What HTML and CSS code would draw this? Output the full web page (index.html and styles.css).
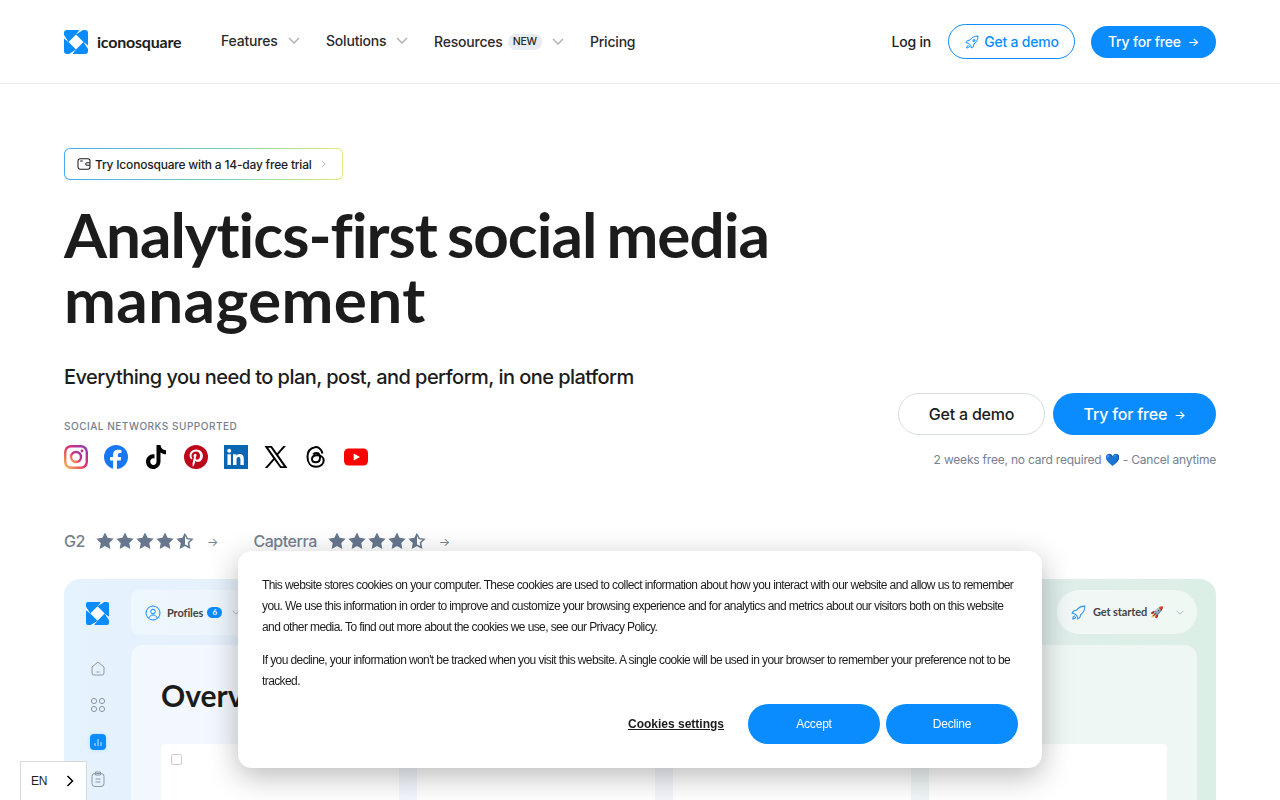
FILE: index.html
```html
<!DOCTYPE html>
<html lang="en">
<head>
    <meta charset="UTF-8">
    <meta name="viewport" content="width=device-width, initial-scale=1.0">
    <title>Iconosquare</title>
    <link rel="stylesheet" href="styles.css">
</head>
<body>
    <svg class="defs" width="0" height="0">
        <defs>
            <symbol id="star" viewBox="0 0 24 24"><path d="M12 .5l3.500 7.300 8 1.100-5.800 5.600 1.400 8L12 18.700 4.900 22.500l1.400-8L.5 8.900l8-1.100z"/></symbol>
            <symbol id="star-half" viewBox="0 0 24 24"><path d="M12 .5v18.200l-7.100 3.800 1.400-8L.5 8.900l8-1.100z"/><path d="M12 3l2.900 5.900 6.400.9-4.600 4.500 1.100 6.400-5.800-3" fill="#fff" stroke="currentColor" stroke-width="2"/></symbol>
        </defs>
    </svg>

    <header class="topbar">
        <a class="brand" href="#">
            <svg class="logo" viewBox="0 0 24 24"><rect width="24" height="24" rx="3" fill="#0a8cff"/><path d="M12 4.500 19.500 12 12 19.500 4.500 12zM12 4.500 15.500 0h3.500zM19.500 12 24 15.500V19zM12 19.500 8.500 24H5zM4.500 12 0 8.500V5z" fill="#fff"/></svg>
            <span>iconosquare</span>
        </a>
        <nav class="nav">
            <a class="nav-item features" href="#">Features <svg class="chev" viewBox="0 0 12 7"><path d="M1 1l5 5 5-5"/></svg></a>
            <a class="nav-item solutions" href="#">Solutions <svg class="chev" viewBox="0 0 12 7"><path d="M1 1l5 5 5-5"/></svg></a>
            <a class="nav-item resources" href="#">Resources <span class="new">NEW</span> <svg class="chev" viewBox="0 0 12 7"><path d="M1 1l5 5 5-5"/></svg></a>
            <a class="nav-item" href="#">Pricing</a>
        </nav>
        <div class="top-actions">
            <a class="login" href="#">Log in</a>
            <a class="btn-outline" href="#">
                <svg class="rocket" viewBox="0 0 24 24"><path d="M21 3c-5 0-9 2-12 6l-4 1-2 3 4 1 3 3 1 4 3-2 1-4c4-3 6-7 6-12zM7 17c-2 0-3 2-3 4 2 0 4-1 4-3M15 8.500a1.500 1.500 0 1 0 .01 0"/></svg>
                Get a demo
            </a>
            <a class="btn-blue" href="#">Try for free <span class="arrow">→</span></a>
        </div>
    </header>

    <main class="hero">
        <a class="trial" href="#">
            <span class="trial-inner">
                <svg class="wallet" viewBox="0 0 16 14"><rect x="1" y="1" width="14" height="12" rx="2.500"/><path d="M3.500 3.500h3M15 5.500h-3.500a1.500 1.500 0 0 0 0 3H15"/></svg>
                <span class="trial-text">Try Iconosquare with a 14-day free trial</span>
                <svg class="trial-chev" viewBox="0 0 6 10"><path d="M1 1l4 4-4 4"/></svg>
            </span>
        </a>
        <h1>Analytics-first social media<br><span class="h1-second">management</span></h1>
        <div class="hero-row">
            <div>
                <p class="lead">Everything you need to plan, post, and perform, in one platform</p>
                <div class="label">SOCIAL NETWORKS SUPPORTED</div>
                <div class="socials">
                    <svg viewBox="0 0 24 24"><defs><linearGradient id="ig" x1="0" y1="1" x2="1" y2="0"><stop offset="0" stop-color="#fdb44b"/><stop offset=".5" stop-color="#e1306c"/><stop offset="1" stop-color="#8a3ab9"/></linearGradient></defs><rect x="1.200" y="1.200" width="21.600" height="21.600" rx="6" fill="none" stroke="url(#ig)" stroke-width="2.400"/><circle cx="12" cy="12" r="5" fill="none" stroke="url(#ig)" stroke-width="2.400"/><circle cx="18" cy="6" r="1.400" fill="#c13584"/></svg>
                    <svg viewBox="0 0 24 24"><circle cx="12" cy="12" r="12" fill="#1877f2"/><path d="M16.700 15.500l.5-3.500h-3.300V9.800c0-1 .5-1.900 2-1.900h1.500V5c-2-.4-3-.3-3.800-.3-2.700 0-4.500 1.700-4.500 4.700V12h-3v3.500h3V24h3.800v-8.500z" fill="#fff"/></svg>
                    <svg viewBox="0 0 24 24"><path d="M12.500 0h4c.3 3 2 5 5.500 5.300v4c-2 0-3.800-.6-5.500-1.800v8.700c0 4.600-3.400 7.800-7.500 7.800S2 20.700 2 16.500c0-4.500 3.800-7.900 8.500-7.300v4.200c-2.400-.6-4.300 1-4.300 3.100 0 2 1.600 3.400 3.300 3.400 1.800 0 3-1.400 3-3.500z" fill="#000"/></svg>
                    <svg viewBox="0 0 24 24"><circle cx="12" cy="12" r="12" fill="#bd081c"/><path d="M12.300 4.500c-4.200 0-6.700 2.800-6.700 5.900 0 1.500.8 3.300 2.100 3.900.4.100.4-.1.600-.9 0-.2 0-.3-.1-.5-1.700-2.200-.3-6.500 3.800-6.500 5.600 0 4.800 8.400 1.100 8.400-.9 0-1.700-.8-1.400-1.700.3-1.100.8-2.300.8-3.100 0-2-2.900-1.700-2.900 1 0 .8.300 1.400.3 1.400l-1.200 5c-.3 1.300 0 3.500.1 4.200h.3c.6-.8 1.400-2.500 1.700-3.600l.6-2.300c.3.600 1.300 1.200 2.300 1.200 3 0 5.200-2.800 5.200-6.200 0-3.300-2.900-6.200-6.600-6.200z" fill="#fff"/></svg>
                    <svg viewBox="0 0 24 24"><rect width="24" height="24" fill="#0a66b2"/><path d="M3.500 9.200h3.400V20H3.500zM5.200 3.800a2 2 0 1 1 0 4 2 2 0 0 1 0-4zM9 9.200h3.200v1.500c.5-.9 1.700-1.800 3.400-1.800 3.500 0 4.200 2.300 4.200 5.300V20h-3.400v-5c0-1.300 0-2.900-1.800-2.900s-2.100 1.400-2.100 2.800V20H9z" fill="#fff"/></svg>
                    <svg viewBox="0 0 24 24"><path d="M.5 1h7.300l5.200 7.200L19.300 1h2.600l-7.700 8.800L23.500 23h-7.300l-5.800-8L3.400 23H.8l8.400-9.500zm3.700 1.800l13 18.400h2.500L6.700 2.800z" fill="#000"/></svg>
                    <svg viewBox="0 0 24 24"><path d="M18.500 8.500C17.500 3.500 13.500 1.700 11 2.200 6 3 3.500 7 3.500 12c0 5.500 3 9.800 8.500 9.800 4.500 0 7.700-2.800 7.700-6.300 0-3.500-3.200-5.200-6.700-5.200-3.200 0-5 1.700-5 3.700s1.800 3.200 3.800 3.200c2.700 0 4.200-2 4.200-4.500 0-3.200-1.800-4.700-3.800-4.700-1.300 0-2.400.6-3 1.600" fill="none" stroke="#000" stroke-width="2"/></svg>
                    <svg viewBox="0 0 24 24"><rect y="3.500" width="24" height="17" rx="4.500" fill="#f00"/><path d="M9.700 8.500l6.300 3.500-6.300 3.500z" fill="#fff"/></svg>
                </div>
            </div>
            <div class="cta">
                <div class="cta-buttons">
                    <a class="btn-big-light" href="#">Get a demo</a>
                    <a class="btn-big-blue" href="#">Try for free <span class="arrow">→</span></a>
                </div>
                <p class="cta-note">2 weeks free, no card required 💙 - Cancel anytime</p>
            </div>
        </div>

        <div class="ratings">
            <span class="rating-name">G2</span>
            <span class="stars"><svg><use href="#star"/></svg><svg><use href="#star"/></svg><svg><use href="#star"/></svg><svg><use href="#star"/></svg><svg><use href="#star-half"/></svg></span>
            <span class="rating-arrow">→</span>
            <span class="rating-name capterra">Capterra</span>
            <span class="stars"><svg><use href="#star"/></svg><svg><use href="#star"/></svg><svg><use href="#star"/></svg><svg><use href="#star"/></svg><svg><use href="#star-half"/></svg></span>
            <span class="rating-arrow">→</span>
        </div>

        <section class="dash">
            <aside class="dash-side">
                <svg class="dash-logo" viewBox="0 0 24 24"><rect width="24" height="24" rx="2" fill="#0a8cff"/><path d="M12 4.500 19.500 12 12 19.500 4.500 12zM12 4.500 15.500 0h3.500zM19.500 12 24 15.500V19zM12 19.500 8.500 24H5zM4.500 12 0 8.500V5z" fill="#fff"/></svg>
                <svg class="side-icon" viewBox="0 0 16 16"><path d="M2 7l6-5 6 5v6a2 2 0 0 1-2 2H4a2 2 0 0 1-2-2zM6.500 12h3"/></svg>
                <svg class="side-icon" viewBox="0 0 16 16"><circle cx="4" cy="4" r="2.600"/><circle cx="12" cy="4" r="2.600"/><circle cx="4" cy="12" r="2.600"/><circle cx="12" cy="12" r="2.600"/></svg>
                <span class="side-active"><svg viewBox="0 0 10 10"><path d="M2 9V6M5 9V2M8 9V5"/></svg></span>
                <svg class="side-icon" viewBox="0 0 16 16"><rect x="2" y="2.500" width="12" height="13" rx="3"/><path d="M5.500 1h5v3h-5zM5.500 8h5M5.500 11h5"/></svg>
            </aside>
            <div class="dash-main">
                <div class="dash-top">
                    <div class="pill-profiles">
                        <svg class="profile-icon" viewBox="0 0 16 16"><circle cx="8" cy="8" r="7"/><circle cx="8" cy="6.500" r="2.300"/><path d="M3.800 13c.8-2 2.200-3 4.200-3s3.400 1 4.200 3"/></svg>
                        <span>Profiles</span>
                        <span class="count">6</span>
                        <svg class="chev small" viewBox="0 0 12 7"><path d="M1 1l5 5 5-5"/></svg>
                    </div>
                    <div class="pill-started">
                        <svg class="started-icon" viewBox="0 0 24 24"><path d="M21 3c-5 0-9 2-12 6l-4 1-2 3 4 1 3 3 1 4 3-2 1-4c4-3 6-7 6-12zM7 17c-2 0-3 2-3 4 2 0 4-1 4-3"/></svg>
                        <span>Get started 🚀</span>
                        <svg class="chev small" viewBox="0 0 12 7"><path d="M1 1l5 5 5-5"/></svg>
                    </div>
                </div>
                <div class="panel">
                    <h2>Overview</h2>
                    <div class="cards">
                        <div class="card"><span class="card-check"></span></div>
                        <div class="card"></div>
                        <div class="card"></div>
                        <div class="card"></div>
                    </div>
                </div>
            </div>
        </section>
    </main>

    <div class="cookie">
        <p>This website stores cookies on your computer. These cookies are used to collect information about how you interact with our website and allow us to remember you. We use this information in order to improve and customize your browsing experience and for analytics and metrics about our visitors both on this website and other media. To find out more about the cookies we use, see our Privacy Policy.</p>
        <p>If you decline, your information won't be tracked when you visit this website. A single cookie will be used in your browser to remember your preference not to be tracked.</p>
        <div class="cookie-actions">
            <a class="cookie-settings" href="#">Cookies settings</a>
            <a class="cookie-btn" href="#">Accept</a>
            <a class="cookie-btn" href="#">Decline</a>
        </div>
    </div>

    <div class="lang">
        <span>EN</span>
        <svg viewBox="0 0 8 12"><path d="M1.500 1l5 5-5 5"/></svg>
    </div>
</body>
</html>
```

FILE: styles.css
```css
* {
    box-sizing: border-box;
}
html, body {
    height: 800px;
    overflow: hidden;
}
body {
    margin: 0;
    font-family: Inter, "Liberation Sans", sans-serif;
    color: #1c1c1c;
    background: #fff;
}
a {
    color: inherit;
    text-decoration: none;
}
p {
    margin: 0;
}
.defs {
    position: absolute;
}
.topbar {
    height: 84px;
    padding: 0 64px;
    display: flex;
    align-items: center;
    border-bottom: 1px solid #ececee;
    letter-spacing: -.2px;
}
.brand {
    display: flex;
    align-items: center;
    gap: 9px;
    width: 157px;
    font-family: Lato, sans-serif;
    font-size: 16px;
    font-weight: 700;
}
.logo {
    width: 24px;
    height: 24px;
}
.nav {
    display: flex;
    align-items: center;
}
.nav-item {
    display: flex;
    align-items: center;
    font-size: 14px;
    font-weight: 500;
    color: #2a2a2a;
}
.features {
    width: 105px;
    margin-top: -2px;
    gap: 10px;
}
.solutions {
    width: 108px;
    margin-top: -2px;
    gap: 10px;
}
.resources {
    gap: 5px;
    margin-right: 26px;
}
.chev {
    width: 12px;
    height: 7px;
    fill: none;
    stroke: #a9adb3;
    stroke-width: 1.300;
}
.new {
    background: #e9edf1;
    border-radius: 10px;
    font-size: 10.500px;
    padding: 2px 5px;
    line-height: 12px;
    margin-right: 5px;
}
.top-actions {
    margin-left: auto;
    display: flex;
    align-items: center;
}
.login {
    font-size: 14px;
    font-weight: 500;
    margin-right: 17px;
}
.btn-outline {
    width: 127px;
    height: 35px;
    border: 1px solid #0a8cff;
    border-radius: 18px;
    color: #0a8cff;
    font-size: 14px;
    font-weight: 500;
    display: flex;
    align-items: center;
    justify-content: center;
    gap: 4px;
    margin-right: 16px;
}
.rocket {
    width: 16px;
    height: 16px;
    fill: none;
    stroke: #0a8cff;
    stroke-width: 1.500;
}
.btn-blue {
    width: 125px;
    height: 32px;
    background: #0a8cff;
    border-radius: 16px;
    color: #fff;
    font-size: 14px;
    font-weight: 500;
    display: flex;
    align-items: center;
    justify-content: center;
    gap: 7px;
}
.arrow {
    font-size: 12px;
}
.hero {
    padding: 64px 64px 0;
}
.trial {
    display: inline-block;
    padding: 1px;
    border-radius: 6px;
    background: linear-gradient(90deg, #4aa8ee, #7fd0b0 60%, #e2ec7c);
}
.trial-inner {
    display: flex;
    align-items: center;
    height: 30px;
    width: 277px;
    padding: 0 12px;
    background: #fff;
    border-radius: 5px;
    font-size: 12px;
    font-weight: 500;
}
.trial-text {
    white-space: nowrap;
    letter-spacing: -.2px;
}
.wallet {
    width: 14px;
    height: 12px;
    margin-right: 4px;
    flex: none;
    fill: none;
    stroke: #1c1c1c;
    stroke-width: 1.200;
}
.trial-chev {
    width: 5px;
    height: 8px;
    margin-left: 9px;
    flex: none;
    fill: none;
    stroke: #a9adb3;
}
h1 {
    margin: 22px 0 0;
    font-family: Lato, sans-serif;
    font-size: 62px;
    line-height: 65px;
    font-weight: 700;
    font-variant-ligatures: none;
    letter-spacing: -1px;
    word-spacing: -4px;
    color: #1c1c1c;
}
.h1-second {
    letter-spacing: .4px;
}
.hero-row {
    display: flex;
    justify-content: space-between;
    align-items: flex-start;
    margin-top: 31px;
}
.lead {
    font-size: 20px;
    line-height: 28px;
    font-weight: 500;
    letter-spacing: -.55px;
}
.label {
    margin-top: 28px;
    font-size: 10px;
    line-height: 14px;
    font-weight: 500;
    letter-spacing: .52px;
    color: #76808f;
}
.socials {
    display: flex;
    gap: 16px;
    margin-top: 12px;
}
.socials svg {
    width: 24px;
    height: 24px;
}
.cta {
    margin-top: 30px;
    display: flex;
    flex-direction: column;
    align-items: flex-end;
}
.cta-buttons {
    display: flex;
    gap: 8px;
}
.btn-big-light, .btn-big-blue {
    height: 42px;
    border-radius: 21px;
    font-size: 16px;
    font-weight: 500;
    letter-spacing: -.2px;
    display: flex;
    align-items: center;
    justify-content: center;
}
.btn-big-light {
    width: 147px;
    border: 1px solid #d8dee3;
}
.btn-big-blue {
    width: 163px;
    gap: 7px;
    background: #0a8cff;
    color: #fff;
}
.cta-note {
    margin-top: 17px;
    font-size: 12px;
    line-height: 16px;
    letter-spacing: -.2px;
    color: #76808f;
}
.ratings {
    display: flex;
    align-items: center;
    margin-top: 60px;
    height: 24px;
    color: #76808f;
}
.rating-name {
    font-size: 16px;
    font-weight: 500;
    letter-spacing: -.45px;
}
.capterra {
    margin-left: 35px;
}
.stars {
    display: flex;
    gap: 2px;
    margin-left: 11px;
    color: #66778e;
}
.stars svg {
    width: 18px;
    height: 18px;
    fill: currentColor;
}
.rating-arrow {
    margin-left: 13px;
    font-size: 12px;
}
.dash {
    display: flex;
    height: 221px;
    margin-top: 26px;
    padding: 11px 19px 0 0;
    border-radius: 16px 16px 0 0;
    overflow: hidden;
    background: linear-gradient(90deg, #e5f3fe, #e6eaf6 50%, #dcefe5);
}
.dash-side {
    width: 67px;
    flex: none;
    display: flex;
    flex-direction: column;
    align-items: center;
}
.dash-logo {
    width: 23px;
    height: 23px;
    margin: 12px 0 35px;
    flex: none;
}
.side-icon {
    width: 16px;
    height: 16px;
    flex: none;
    margin-bottom: 21px;
    fill: none;
    stroke: #8d96a3;
    stroke-width: 1;
}
.side-active {
    width: 16px;
    height: 16px;
    flex: none;
    margin-bottom: 21px;
    background: #0a8cff;
    border-radius: 4px;
    display: flex;
    align-items: center;
    justify-content: center;
    box-shadow: 0 0 4px #b5dcff;
}
.side-active svg {
    width: 10px;
    height: 10px;
    fill: none;
    stroke: #cfe8ff;
}
.dash-main {
    flex: 1;
}
.dash-top {
    display: flex;
    justify-content: space-between;
    height: 46px;
}
.pill-profiles, .pill-started {
    display: flex;
    align-items: center;
    font-family: Lato, sans-serif;
    font-size: 11px;
    font-weight: 700;
    letter-spacing: -.1px;
    color: #444;
    background: rgba(255, 255, 255, .35);
}
.pill-profiles {
    gap: 4px;
    width: 160px;
    height: 45px;
    padding-left: 14px;
    border-radius: 8px;
}
.pill-started {
    gap: 6px;
    width: 140px;
    height: 44px;
    padding-left: 13px;
    border-radius: 22px;
    background: rgba(255, 255, 255, .55);
}
.profile-icon {
    width: 16px;
    height: 16px;
    flex: none;
    margin-right: 2px;
    fill: none;
    stroke: #0a8cff;
}
.count {
    background: #0a8cff;
    color: #fff;
    border-radius: 7px;
    width: 15px;
    height: 11px;
    font-size: 8px;
    line-height: 11px;
    text-align: center;
}
.started-icon {
    width: 17px;
    height: 17px;
    flex: none;
    fill: none;
    stroke: #2f94f0;
    stroke-width: 1.500;
}
.chev.small {
    width: 8px;
    height: 5px;
    flex: none;
    margin-left: 6px;
}
.panel {
    margin-top: 9px;
    height: 300px;
    padding: 30px;
    border-radius: 12px 12px 0 0;
    background: rgba(255, 255, 255, .5);
}
.panel h2 {
    margin: 0 0 29px;
    font-family: Lato, sans-serif;
    font-size: 30px;
    line-height: 40px;
    font-weight: 700;
    color: #1c1c1c;
}
.cards {
    display: grid;
    grid-template-columns: repeat(4, 1fr);
    gap: 18px;
}
.card {
    height: 120px;
    padding: 10px;
    background: #fff;
    border-radius: 4px;
}
.card-check {
    display: block;
    width: 11px;
    height: 11px;
    border: 1px solid #ccc;
    border-radius: 2px;
}
.cookie {
    position: fixed;
    left: 238px;
    top: 551px;
    width: 804px;
    height: 217px;
    padding: 24px;
    background: #fff;
    border-radius: 14px;
    box-shadow: 0 8px 30px rgba(0, 0, 0, .28);
    font-family: "Liberation Sans", Arial, sans-serif;
    font-size: 12px;
    line-height: 21px;
    letter-spacing: -.6px;
    color: #1c1c1c;
}
.cookie p + p {
    margin-top: 12px;
}
.cookie-actions {
    display: flex;
    align-items: center;
    justify-content: flex-end;
    gap: 6px;
    margin-top: 12px;
}
.cookie-settings {
    font-weight: 700;
    letter-spacing: 0;
    text-decoration: underline;
    margin-right: 18px;
}
.cookie-btn {
    width: 132px;
    height: 40px;
    border-radius: 20px;
    background: #0a8cff;
    color: #fff;
    letter-spacing: -.2px;
    display: flex;
    align-items: center;
    justify-content: center;
}
.lang {
    position: fixed;
    left: 20px;
    top: 761px;
    width: 67px;
    height: 39px;
    display: flex;
    align-items: center;
    justify-content: space-between;
    padding: 0 12px 0 10px;
    background: #fff;
    border: 1px solid #d9d9d9;
    border-bottom: 0;
    font-size: 12px;
    letter-spacing: -.3px;
    font-family: "Liberation Sans", sans-serif;
}
.lang svg {
    width: 8px;
    height: 12px;
    fill: none;
    stroke: #000;
    stroke-width: 1.500;
}
```
